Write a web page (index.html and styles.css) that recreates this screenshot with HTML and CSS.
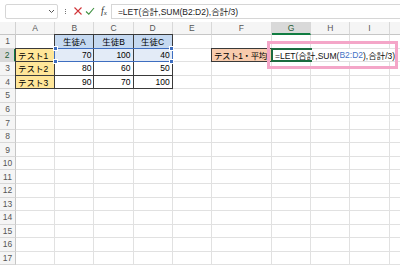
FILE: index.html
```html
<!DOCTYPE html>
<html lang="ja">
<head>
<meta charset="utf-8">
<link rel="stylesheet" href="styles.css">
</head>
<body>
<div class="app">
  <div class="bar">
    <div class="namebox">
      <svg class="chev" width="7" height="5" viewBox="0 0 7 5"><path d="M1 1 L3.5 3.5 L6 1" fill="none" stroke="#555" stroke-width="1"/></svg>
    </div>
    <div class="dots"><i></i><i></i><i></i></div>
    <svg class="ico" width="10" height="10" viewBox="0 0 10 10"><path d="M1.5 1.5 L8.5 8.5 M8.5 1.5 L1.5 8.5" stroke="#d13438" stroke-width="1.1" fill="none"/></svg>
    <svg class="ico" width="10" height="10" viewBox="0 0 10 10"><path d="M1 5.5 L3.8 8.2 L9 2" stroke="#3f9142" stroke-width="1.1" fill="none"/></svg>
    <span class="fx">f<sub>x</sub></span>
    <div class="fbox">=LET(合計,SUM(B2:D2),合計/3)</div>
  </div>
  <div class="sheet">
    <b class="corner"></b><b class="ch">A</b><b class="ch">B</b><b class="ch">C</b><b class="ch">D</b><b class="ch">E</b><b class="ch">F</b><b class="ch on">G</b><b class="ch">H</b><b class="ch">I</b><b class="ch"></b>

    <b class="rh">1</b><i></i><i class="t th">生徒A</i><i class="t th">生徒B</i><i class="t th">生徒C</i><i></i><i></i><i></i><i></i><i></i><i></i>
    <b class="rh on">2</b><i class="t ty">テスト1</i><i class="t n sr">70</i><i class="t n sr">100</i><i class="t n sr">40</i><i></i><i class="t pe">テスト1・平均</i><i></i><i></i><i></i><i></i>
    <b class="rh">3</b><i class="t ty">テスト2</i><i class="t n">80</i><i class="t n">60</i><i class="t n">50</i><i></i><i></i><i></i><i></i><i></i><i></i>
    <b class="rh">4</b><i class="t ty">テスト3</i><i class="t n">90</i><i class="t n">70</i><i class="t n">100</i><i></i><i></i><i></i><i></i><i></i><i></i>
    <b class="rh">5</b><i></i><i></i><i></i><i></i><i></i><i></i><i></i><i></i><i></i><i></i>
    <b class="rh">6</b><i></i><i></i><i></i><i></i><i></i><i></i><i></i><i></i><i></i><i></i>
    <b class="rh">7</b><i></i><i></i><i></i><i></i><i></i><i></i><i></i><i></i><i></i><i></i>
    <b class="rh">8</b><i></i><i></i><i></i><i></i><i></i><i></i><i></i><i></i><i></i><i></i>
    <b class="rh">9</b><i></i><i></i><i></i><i></i><i></i><i></i><i></i><i></i><i></i><i></i>
    <b class="rh">10</b><i></i><i></i><i></i><i></i><i></i><i></i><i></i><i></i><i></i><i></i>
    <b class="rh">11</b><i></i><i></i><i></i><i></i><i></i><i></i><i></i><i></i><i></i><i></i>
    <b class="rh">12</b><i></i><i></i><i></i><i></i><i></i><i></i><i></i><i></i><i></i><i></i>
    <b class="rh">13</b><i></i><i></i><i></i><i></i><i></i><i></i><i></i><i></i><i></i><i></i>
    <b class="rh">14</b><i></i><i></i><i></i><i></i><i></i><i></i><i></i><i></i><i></i><i></i>
    <b class="rh">15</b><i></i><i></i><i></i><i></i><i></i><i></i><i></i><i></i><i></i><i></i>
    <b class="rh">16</b><i></i><i></i><i></i><i></i><i></i><i></i><i></i><i></i><i></i><i></i>
    <b class="rh">17</b><i></i><i></i><i></i><i></i><i></i><i></i><i></i><i></i><i></i><i></i>

    <div class="selrange"><span class="h tl"></span><span class="h tr"></span><span class="h bl"></span><span class="h br"></span></div>
    <div class="edit">=LET(合計,SUM(<span class="ref">B2:D2</span>),合計/3)<span class="caret"></span></div>
    <div class="active"></div>
    <div class="mark"></div>
  </div>
</div>
</body>
</html>
```
FILE: styles.css
```css
html, body {
  margin: 0;
  padding: 0;
  background: #ffffff;
}
body {
  width: 400px;
  height: 265px;
  overflow: hidden;
  font-family: "Liberation Sans", "Noto Sans CJK JP", sans-serif;
  font-size: 8.5px;
  color: #000;
}
.app {
  width: 400px;
  height: 265px;
  overflow: hidden;
}
.bar {
  height: 22px;
  display: flex;
  align-items: center;
  padding-left: 5px;
  box-sizing: border-box;
  background: #ffffff;
}
.namebox {
  width: 53px;
  height: 15px;
  box-sizing: border-box;
  border: 1px solid #d6d6d6;
  border-radius: 2px;
  display: flex;
  align-items: center;
  justify-content: flex-end;
  padding-right: 2px;
}
.dots {
  width: 3px;
  margin-left: 6px;
  display: flex;
  flex-direction: column;
  align-items: center;
  gap: 1px;
}
.dots i {
  width: 1px;
  height: 1px;
  background: #777;
}
.ico {
  margin-left: 6px;
  display: block;
}
.ico + .ico {
  margin-left: 2px;
}
.fx {
  margin-left: 6px;
  font-family: "Liberation Serif", serif;
  font-style: italic;
  font-size: 10px;
  color: #333;
  line-height: 1;
}
.fx sub {
  font-size: 7px;
  vertical-align: -1px;
}
.fbox {
  flex: 1;
  margin-left: 4px;
  height: 15px;
  box-sizing: border-box;
  border: 1px solid #d6d6d6;
  border-right: none;
  padding-left: 6px;
  display: flex;
  align-items: center;
  white-space: nowrap;
  color: #222;
}
.sheet {
  display: grid;
  grid-template-columns: 16px repeat(5, 39.2px) 60px repeat(4, 39.2px);
  grid-template-rows: 13px repeat(17, 13.55px);
  position: relative;
  width: 429px;
}
.sheet > b, .sheet > i {
  font-weight: normal;
  font-style: normal;
  box-sizing: border-box;
  white-space: nowrap;
  display: flex;
  align-items: center;
}
.sheet > i {
  border-right: 1px solid #e1e1e1;
  border-bottom: 1px solid #e1e1e1;
  padding: 0 1px;
}
.corner {
  background: #f5f5f5;
  border-right: 1px solid #d2d2d2;
  border-bottom: 1px solid #c6c6c6;
}
.ch {
  background: #f5f5f5;
  border-right: 1px solid #d8d8d8;
  border-bottom: 1px solid #c6c6c6;
  justify-content: center;
  color: #555;
}
.ch.on {
  background: #d9d9d9;
  border-bottom: 2px solid #107c41;
  color: #1e5d36;
}
.rh {
  background: #f5f5f5;
  border-right: 1px solid #c6c6c6;
  border-bottom: 1px solid #d8d8d8;
  justify-content: center;
  color: #555;
}
.rh.on {
  background: #d9d9d9;
  border-right: 2px solid #107c41;
  color: #1e5d36;
}
.sheet > i.t {
  border-right-color: #3a3a3a;
  border-bottom-color: #3a3a3a;
  box-shadow: -1px 0 0 0 #3a3a3a, 0 -1px 0 0 #3a3a3a, -1px -1px 0 0 #3a3a3a;
}
.sheet > i.th {
  background: #c5d9f1;
  justify-content: center;
}
.sheet > i.ty {
  background: #ffe699;
  padding-left: 2px;
}
.sheet > i.n {
  justify-content: flex-end;
  padding-right: 2px;
}
.sheet > i.sr {
  background: #e3ebf7;
}
.sheet > i.pe {
  background: #f8cbad;
  padding-left: 2px;
  letter-spacing: -0.4px;
}
.selrange {
  position: absolute;
  grid-column: 3 / 6;
  grid-row: 3 / 4;
  top: -1px;
  left: -1px;
  right: 0;
  bottom: 0;
  border: 1.5px solid #3e6ec0;
}
.h {
  position: absolute;
  width: 3px;
  height: 3px;
  background: #3e6ec0;
  border: 0.5px solid #fff;
}
.tl { top: -2.5px; left: -2.5px; }
.tr { top: -2.5px; right: -2.5px; }
.bl { bottom: -2.5px; left: -2.5px; }
.br { bottom: -2.5px; right: -2.5px; }
.edit {
  position: absolute;
  grid-column: 8 / 11;
  grid-row: 3 / 4;
  top: 0;
  left: 0;
  right: 0;
  bottom: 1px;
  background: #fff;
  display: flex;
  align-items: center;
  padding-left: 3px;
  white-space: nowrap;
  color: #111;
}
.ref {
  color: #4472c4;
}
.caret {
  display: inline-block;
  width: 1px;
  height: 11px;
  background: #222;
  margin-left: 1px;
}
.active {
  position: absolute;
  grid-column: 8 / 9;
  grid-row: 3 / 4;
  top: -1px;
  left: -1px;
  right: -1px;
  bottom: 0;
  border: 2px solid #1d6b3f;
  border-right: none;
}
.mark {
  position: absolute;
  grid-column: 8 / 11;
  grid-row: 3 / 4;
  top: -8px;
  left: -5px;
  right: -8px;
  bottom: -7px;
  border: 3px solid #f4a6c8;
}
```
